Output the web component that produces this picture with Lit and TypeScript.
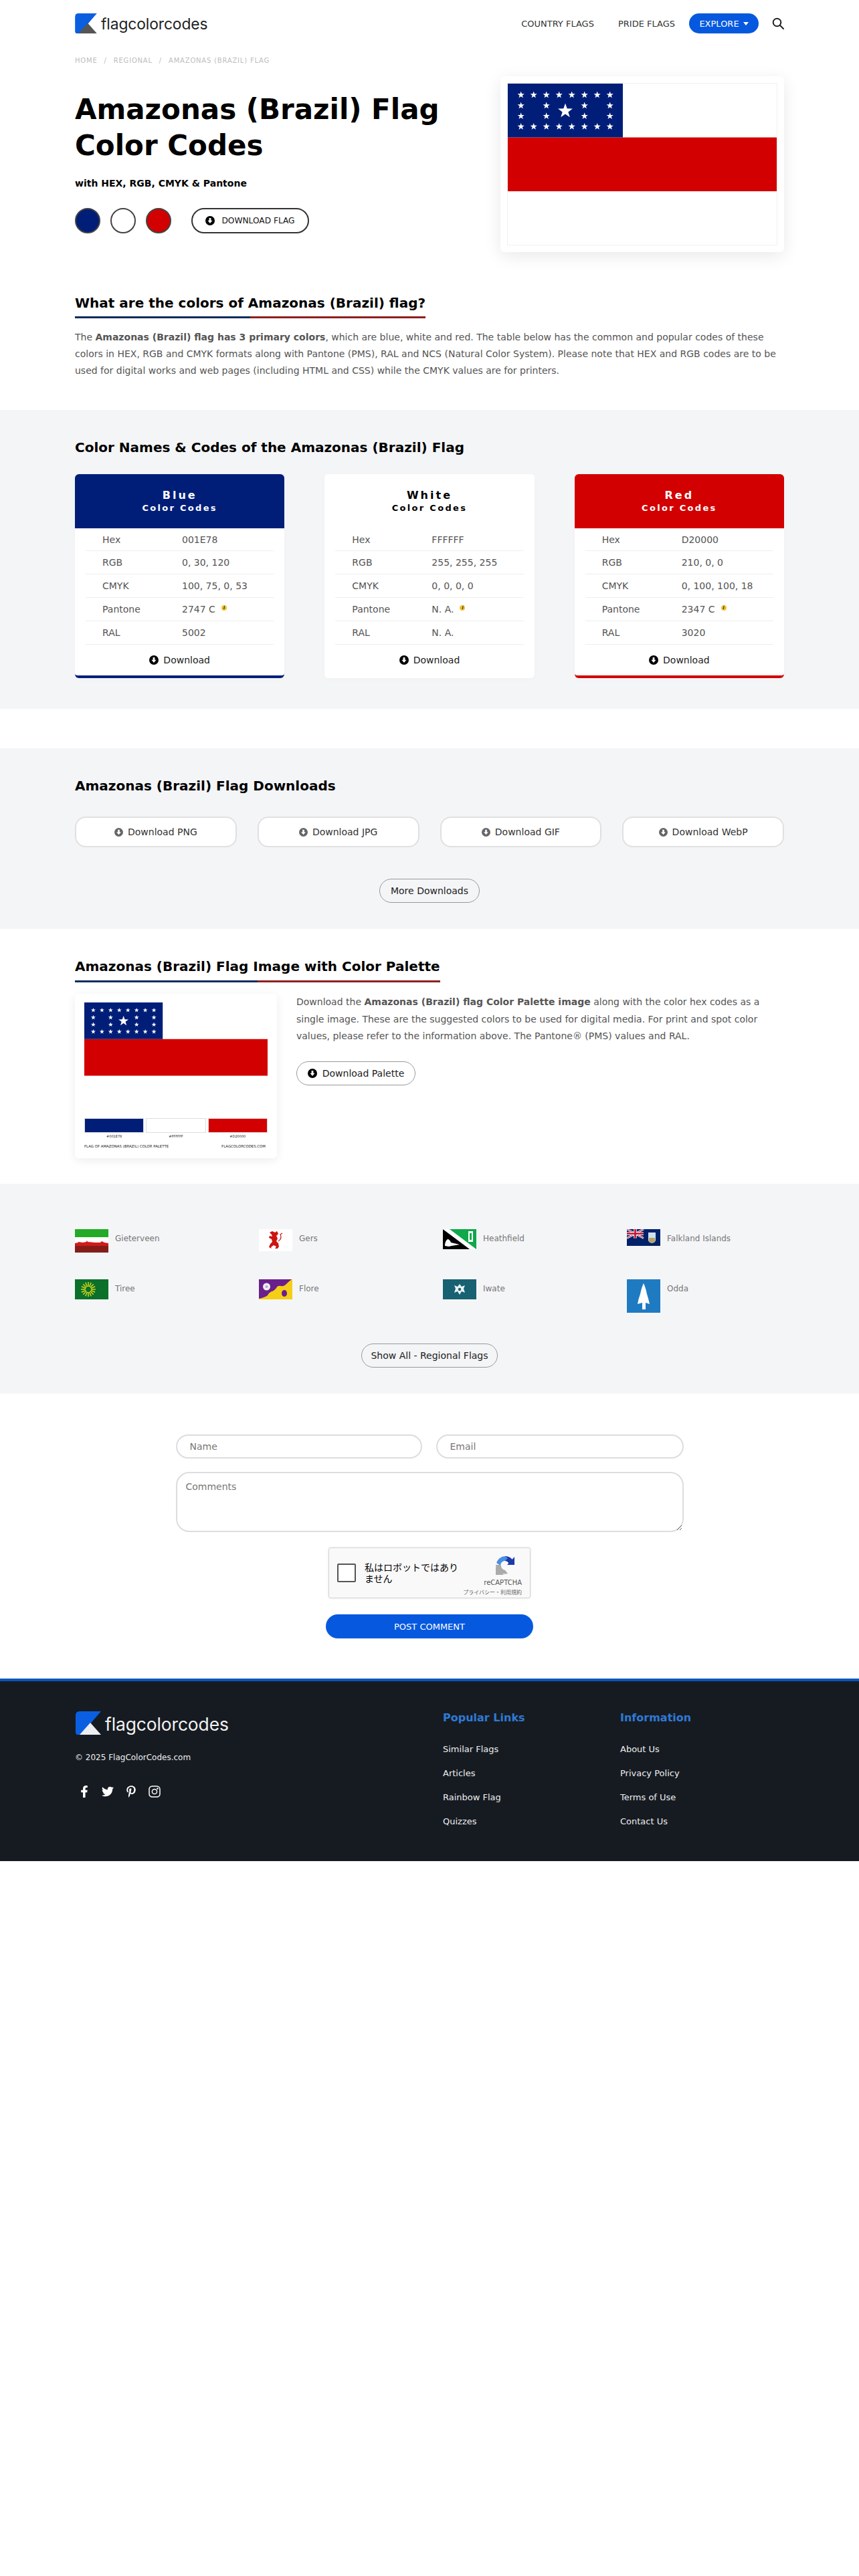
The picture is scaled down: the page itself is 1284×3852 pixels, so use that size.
import {LitElement, html, css, svg} from 'lit';
import {customElement} from 'lit/decorators.js';

const BLUE = '#001E78';
const RED = '#D20000';

// five pointed star as polygon points
const star = (cx: number, cy: number, r: number) => {
  const pts: string[] = [];
  for (let i = 0; i < 10; i++) {
    const rad = i % 2 ? r * 0.4 : r;
    const a = -Math.PI / 2 + (i * Math.PI) / 5;
    pts.push(`${(cx + rad * Math.cos(a)).toFixed(2)},${(cy + rad * Math.sin(a)).toFixed(2)}`);
  }
  return svg`<polygon points=${pts.join(' ')} fill="#fff"></polygon>`;
};

const amazonasFlag = (w: number, h: number) => {
  const cols = [19.7, 38.7, 57.7, 76.7, 95.7, 114.7, 133.7, 152.7];
  const midCols = [19.7, 57.7, 114.7, 152.7];
  return html`<svg class="flag-svg" width=${w} height=${h} viewBox="0 0 402 241" preserveAspectRatio="none">
    <rect width="402" height="241" fill="#fff"></rect>
    <rect y="80.5" width="402" height="80.5" fill=${RED}></rect>
    <rect width="172" height="80.5" fill=${BLUE}></rect>
    ${cols.map((x) => star(x, 17, 5.4))}
    ${cols.map((x) => star(x, 64.3, 5.4))}
    ${midCols.map((x) => star(x, 33, 5.4))}
    ${midCols.map((x) => star(x, 48.7, 5.4))}
    ${star(86, 41, 11.5)}
  </svg>`;
};

const dlIcon = (cls = '') => html`<svg class="dl ${cls}" viewBox="0 0 16 16">
  <circle cx="8" cy="8" r="8" fill="currentColor"></circle>
  <path d="M6.4 3.4h3.2v4.4h2.5L8 12.6 3.9 7.8h2.5z" fill="#fff"></path>
</svg>`;

const logo = (footer: boolean) => html`<span class="logo ${footer ? 'logo-foot' : ''}">
  <svg class="logo-mark" viewBox="0 0 38 35">
    <path d="M6 0H38L8 35H3Q0 35 0 31V6Q0 0 6 0Z" fill="#0a5fe0"></path>
    <path d="M24 17L40 35H8Z" fill=${footer ? '#eceef2' : '#555'} transform="translate(-2 0)"></path>
  </svg>
  <span class="logo-text">flagcolorcodes</span>
</span>`;

const colors = [
  {name: 'Blue', bg: BLUE, fg: '#fff', edge: BLUE, rows: [['Hex', '001E78'], ['RGB', '0, 30, 120'], ['CMYK', '100, 75, 0, 53'], ['Pantone', '2747 C'], ['RAL', '5002']]},
  {name: 'White', bg: '#fff', fg: '#000', edge: '#fff', rows: [['Hex', 'FFFFFF'], ['RGB', '255, 255, 255'], ['CMYK', '0, 0, 0, 0'], ['Pantone', 'N. A.'], ['RAL', 'N. A.']]},
  {name: 'Red', bg: RED, fg: '#fff', edge: RED, rows: [['Hex', 'D20000'], ['RGB', '210, 0, 0'], ['CMYK', '0, 100, 100, 18'], ['Pantone', '2347 C'], ['RAL', '3020']]},
];

const miniFlags = [
  {name: 'Gieterveen', w: 50, h: 35, art: svg`
    <rect width="50" height="35" fill="#fff"></rect>
    <rect width="50" height="12" fill="#23ab27"></rect>
    <path d="M0 35V21L5 20V19L12 20L17 19L18 17L19 19L30 20L38 20L40 18L42 19L44 20L50 21V35Z" fill="#cf1c1c"></path>
    <rect y="25" width="50" height="10" fill="#841d18"></rect>`},
  {name: 'Gers', w: 50, h: 33, art: svg`
    <rect width="50" height="33" fill="#fff"></rect>
    <path d="M16 5L20 3L24 5L27 3L29 7L26 10L28 14L26 18L29 21L30 26L28 29L24 29L26 26L22 24L18 27L19 29L15 27L17 22L20 19L19 15L15 13L16 10L20 11L19 8Z" fill="#cc1410"></path>
    <path d="M29 18Q35 14 32 8L35 6" fill="none" stroke="#cc1410" stroke-width="1.2"></path>`},
  {name: 'Heathfield', w: 50, h: 30, art: svg`
    <rect width="50" height="30" fill="#0fa84a"></rect>
    <path d="M0 0V30H42L0 0Z" fill="#000"></path>
    <path d="M0 0H10L50 30H40Z" fill="#fff"></path>
    <path d="M38 3h7v16h-7z" fill="#fff"></path><path d="M40 6h3v10h-3z" fill="#0fa84a"></path>
    <path d="M3 25Q3 18 7 15Q10 15 12 20L25 23L13 25L9 26Z" fill="#fff"></path>`},
  {name: 'Falkland Islands', w: 50, h: 25, art: svg`
    <rect width="50" height="25" fill="#012169"></rect>
    <path d="M0 0L25 13.5M25 0L0 13.5" stroke="#fff" stroke-width="2.6"></path>
    <path d="M0 0L25 13.5M25 0L0 13.5" stroke="#c8102e" stroke-width="1"></path>
    <path d="M12.5 0V13.5M0 6.75H25" stroke="#fff" stroke-width="4.4"></path>
    <path d="M12.5 0V13.5M0 6.75H25" stroke="#c8102e" stroke-width="2.6"></path>
    <path d="M32 5H43V16Q43 20 37.500 21Q32 20 32 16Z" fill="#cfe0ee"></path>
    <path d="M33 13H42V19L37.500 21L33 19Z" fill="#b7a467"></path>`},
  {name: 'Tiree', w: 50, h: 30, art: svg`
    <rect width="50" height="30" fill="#0a702a"></rect>
    ${Array.from({length: 16}, (_, i) => {
      const a = (i * Math.PI) / 8;
      return svg`<line x1=${20 + 4 * Math.cos(a)} y1=${15 + 4 * Math.sin(a)} x2=${20 + 11 * Math.cos(a)} y2=${15 + 11 * Math.sin(a)} stroke="#d6d61e" stroke-width="1.5"></line>`;
    })}`},
  {name: 'Flore', w: 50, h: 30, art: svg`
    <rect width="50" height="30" fill="#f5cf16"></rect>
    <path d="M0 0H49Q45 3 42 6Q38 11 33 10Q28 9 26 13Q22 18 19 18Q15 20 13 24Q9 27 0 29Z" fill="#6a1f8c"></path>
    <ellipse cx="38" cy="21" rx="4" ry="5" fill="#6a1f8c"></ellipse>
    <circle cx="11.500" cy="11" r="5.500" fill="#eee"></circle><circle cx="11.500" cy="11" r="2" fill="#b9a6c9"></circle>`},
  {name: 'Iwate', w: 50, h: 30, art: svg`
    <rect width="50" height="30" fill="#186172"></rect>
    <path d="M25 7L28 11L33 9L31 14L33 20L28 18L25 23L22 18L17 20L19 14L17 9L22 11Z" fill="#e6f2f4"></path>
    <circle cx="25" cy="15" r="2.200" fill="#186172"></circle>`},
  {name: 'Odda', w: 50, h: 50, art: svg`
    <rect width="50" height="50" fill="#1f7bc1"></rect>
    <path d="M25 6Q28 12 30 22Q33 32 34 37L28 35V45H23V35L16 37Q17 30 20 22Q22 12 25 6Z" fill="#fff"></path>`},
];

@customElement('app-root')
export class AppRoot extends LitElement {
  static styles = css`
    :host {
      display: block;
      font-family: "DejaVu Sans", sans-serif;
      color: #555;
      background: #fff;
    }
    * { box-sizing: border-box; margin: 0; padding: 0; }
    a { color: inherit; text-decoration: none; }
    svg { display: block; flex: none; }

    .wrap { width: 1060px; margin: 0 auto; }
    .gray { background: #f4f5f7; }

    /* header */
    .nav { display: flex; align-items: center; justify-content: space-between; height: 70px; }
    .nav-links { display: flex; align-items: center; font-size: 13px; color: #333; }
    .nav-links a { margin-right: 36px; }
    .nav-links a:nth-child(2) { margin-right: 21px; }
    .nav-links a.explore {
      display: flex; align-items: center; justify-content: center; gap: 6px;
      width: 104px; height: 30px; margin-right: 0; border-radius: 15px;
      background: #0659de; color: #fff; font-size: 13px;
    }
    .caret { border: 4px solid transparent; border-top: 5px solid #fff; border-bottom: 0; }
    .search { margin-left: 20px; width: 18px; height: 18px; color: #222; }

    .logo { display: flex; align-items: flex-start; gap: 6px; height: 30px; }
    .logo-mark { width: 33px; height: 30px; }
    .logo-text { font-family: Inter, sans-serif; font-size: 22.800px; line-height: 32px; color: #222; letter-spacing: -0.1px; }
    .logo-foot { height: 35px; gap: 5px; }
    .logo-foot .logo-mark { width: 40px; height: 35px; }
    .logo-foot .logo-text { color: #f2f2f2; font-size: 26.400px; line-height: 39px; }

    .crumbs { font-size: 10px; line-height: 16px; margin-top: 13px; color: #bdbdbd; letter-spacing: 0.8px; }
    .crumbs i { font-style: normal; margin: 0 10px; }

    /* hero */
    .hero { display: flex; justify-content: space-between; padding-top: 15px; }
    .hero-left { padding-top: 23px; }
    h1 { font-size: 42px; line-height: 54px; font-weight: 700; color: #000; width: 600px; }
    .sub { font-size: 14px; line-height: 24px; font-weight: 700; color: #000; margin-top: 17px; }
    .swatches { display: flex; align-items: center; margin-top: 25px; }
    .swatch { width: 38px; height: 38px; border-radius: 50%; border: 2px solid #444; margin-right: 15px; }
    .swatches .btn-flag { margin-left: 15px; }
    .btn-flag {
      display: flex; align-items: center; justify-content: center; gap: 10px;
      width: 176px; height: 38px; border: 2px solid #333; border-radius: 19px;
      font-size: 12.200px; color: #111;
    }
    .flag-card {
      width: 424px; height: 263px; padding: 11px; background: #fff; border-radius: 6px;
      box-shadow: 0 6px 26px rgba(0, 0, 0, 0.09);
    }
    .flag-card .flag-svg { outline: 1px solid #f0f0f0; }

    .dl { width: 14px; height: 14px; color: #000; }
    .dl.gray-ic { color: #666; width: 13px; height: 13px; }

    /* headings */
    .rule {
      display: inline-block; font-size: 20px; line-height: 24px; font-weight: 700; color: #000;
      padding-bottom: 11px;
      background: linear-gradient(90deg, #0b2c5e 50%, #8e2020 50%) left bottom / 100% 3px no-repeat;
    }
    h2.plain { font-size: 20px; line-height: 24px; font-weight: 700; color: #000; }

    .intro { margin-top: 64px; padding-bottom: 46px; }
    .intro p { margin-top: 16px; font-size: 14px; line-height: 25px; color: #555; }
    b { font-weight: 700; }

    /* colour cards */
    .codes { padding: 44px 0 46px; margin-bottom: 59px; }
    .card-grid { display: grid; grid-template-columns: repeat(3, 1fr); gap: 60px; margin-top: 28px; }
    .color-card { height: 305px; background: #fff; border-radius: 6px; overflow: hidden; border-bottom: 4px solid; box-shadow: 0 2px 8px rgba(0,0,0,0.02); }
    .color-head { position: relative; height: 81px; margin-bottom: -1px; padding-top: 22px; text-align: center; font-weight: 700; }
    .color-head div:first-child { font-size: 16px; line-height: 20px; letter-spacing: 3px; }
    .color-head div:last-child { font-size: 13px; line-height: 18px; letter-spacing: 2.300px; }
    .color-rows { margin: 0 16px; border-top: 1px solid #eee; }
    .color-row { display: flex; align-items: center; height: 35px; padding-left: 25px; border-bottom: 1px solid #eee; font-size: 14px; color: #555; }
    .color-row:first-child { height: 34px; }
    .color-row span:first-child { width: 119px; }
    .info {
      display: inline-block; width: 8px; height: 8px; border-radius: 50%; background: #f2c230; color: #222;
      font-size: 7px; line-height: 8px; text-align: center; font-weight: 700; font-style: italic;
      margin-left: 9px; vertical-align: 5px;
    }
    .card-dl { display: flex; align-items: center; justify-content: center; gap: 7px; height: 46px; font-size: 14px; color: #222; }

    /* downloads */
    .downloads { padding: 44px 0 39px; }
    .dl-grid { display: grid; grid-template-columns: repeat(4, 1fr); gap: 31px; margin-top: 34px; }
    .dl-btn {
      display: flex; align-items: center; justify-content: center; gap: 7px; height: 46px;
      background: #fff; border: 2px solid #e0e0e0; border-radius: 16px; font-size: 14px; color: #333;
    }
    .center { display: flex; justify-content: center; }
    .pill { display: flex; align-items: center; justify-content: center; height: 36px; border: 1px solid #999; border-radius: 18px; font-size: 14px; color: #222; }
    .more { margin-top: 47px; }
    .more .pill { width: 150px; }

    /* palette */
    .palette-sec { padding: 44px 0 38px; }
    .palette-sec .rule { padding-bottom: 12px; }
    .palette-row { display: flex; gap: 29px; margin-top: 17px; }
    .palette-card {
      flex: none; width: 302px; height: 246px; padding: 13px 14px; background: #fff; border-radius: 6px;
      box-shadow: 0 3px 14px rgba(0, 0, 0, 0.08);
    }
    .swatch-row { display: flex; gap: 3px; margin-top: 9px; }
    .swatch-row div { flex: 1; }
    .chip { height: 22px; border: 1px solid #ddd; }
    .hex { font-size: 5px; line-height: 10px; text-align: center; color: #222; }
    .pal-foot { display: flex; justify-content: space-between; margin-top: 6px; padding-right: 3px; font-size: 5.400px; line-height: 8px; color: #222; }
    .palette-text p { font-size: 14px; line-height: 25.500px; color: #555; }
    .palette-text .pill { width: 178px; gap: 8px; margin-top: 24px; }

    /* regional */
    .regional { padding: 68px 0 39px; }
    .flag-grid { display: grid; grid-template-columns: repeat(4, 275px); row-gap: 40px; }
    .flag-item { display: flex; align-items: flex-start; gap: 10px; font-size: 12px; line-height: 29px; color: #777; }
    .show { margin-top: 46px; }
    .show .pill { width: 204px; }

    /* form */
    .form { width: 759px; margin: 0 auto; padding: 61px 0 60px; }
    .inputs { display: grid; grid-template-columns: 368px 370px; gap: 21px; }
    input, textarea {
      display: block; width: 100%; border: 2px solid #ddd; border-radius: 18px; background: #fff;
      font-family: inherit; font-size: 14px; color: #333; outline: none;
    }
    input { height: 36px; padding: 0 19px; }
    textarea { height: 90px; margin-top: 20px; padding: 12px 13px; border-radius: 20px; }
    ::placeholder { color: #777; opacity: 1; }
    .captcha {
      position: relative; display: flex; align-items: center; width: 302px; height: 76px; margin: 23px auto 0;
      background: #f9f9f9; border: 1px solid #d3d3d3; border-radius: 3px; box-shadow: 0 0 4px rgba(0,0,0,.08);
      padding-left: 12px; color: #000;
    }
    .tick { flex: none; width: 28px; height: 28px; background: #fff; border: 2px solid #555; border-radius: 2px; }
    .captcha-text { width: 142px; margin-left: 13px; font-family: "Noto Sans CJK JP", sans-serif; font-size: 14px; line-height: 17px; }
    .captcha-brand { position: absolute; right: 12px; top: 10px; display: flex; flex-direction: column; align-items: flex-end; color: #555; }
    .captcha-brand svg { margin-right: 9px; }
    .captcha-brand div:nth-of-type(1) { font-size: 10px; line-height: 13px; margin-top: 3px; }
    .captcha-brand div:nth-of-type(2) { font-family: "Noto Sans CJK JP", sans-serif; font-size: 8px; line-height: 12px; margin-top: 2px; color: #666; }
    .post {
      display: flex; align-items: center; justify-content: center; width: 310px; height: 36px; margin: 24px auto 0;
      border-radius: 18px; background: #0659de; color: #fff; font-size: 13px;
    }

    /* footer */
    .footer { height: 273px; background: #161b22; border-top: 4px solid #0a56bd; color: #eee; }
    .footer .wrap { display: flex; padding-top: 45px; }
    .foot-brand { flex: none; width: 550px; }
    .copy { font-size: 12px; line-height: 18px; margin-top: 25px; }
    .social { display: flex; align-items: center; gap: 17px; margin-top: 33px; padding-left: 5px; }
    .social svg { width: 18px; height: 18px; fill: #fff; }
    .social svg.insta { fill: none; stroke: #fff; stroke-width: 1.5; }
    .foot-col { flex: none; width: 265px; }
    .foot-col h3 { font-size: 16px; line-height: 20px; font-weight: 700; color: #2f7ad6; margin-bottom: 28px; }
    .foot-col a { display: block; font-size: 13px; line-height: 18px; margin-bottom: 18px; color: #eee; }
  `;

  private colorCard(c: (typeof colors)[number]) {
    return html`<div class="color-card" style="border-bottom-color:${c.edge}">
      <div class="color-head" style="background:${c.bg};color:${c.fg}">
        <div>${c.name}</div>
        <div>Color Codes</div>
      </div>
      <div class="color-rows">
        ${c.rows.map(([k, v]) => html`<div class="color-row">
          <span>${k}</span>
          <span>${v}${k === 'Pantone' ? html`<i class="info">i</i>` : ''}</span>
        </div>`)}
      </div>
      <a class="card-dl">${dlIcon()}Download</a>
    </div>`;
  }

  render() {
    return html`
      <div class="wrap">
        <header class="nav">
          ${logo(false)}
          <nav class="nav-links">
            <a>COUNTRY FLAGS</a>
            <a>PRIDE FLAGS</a>
            <a class="explore">EXPLORE <span class="caret"></span></a>
            <svg class="search" viewBox="0 0 18 18" fill="none" stroke="currentColor" stroke-width="2">
              <circle cx="7.500" cy="7.500" r="5.800"></circle><path d="M12 12l5 5" stroke-linecap="round"></path>
            </svg>
          </nav>
        </header>
        <div class="crumbs">HOME<i>/</i>REGIONAL<i>/</i>AMAZONAS (BRAZIL) FLAG</div>
        <section class="hero">
          <div class="hero-left">
            <h1>Amazonas (Brazil) Flag<br />Color Codes</h1>
            <div class="sub">with HEX, RGB, CMYK &amp; Pantone</div>
            <div class="swatches">
              ${[BLUE, '#fff', RED].map((c) => html`<span class="swatch" style="background:${c}"></span>`)}
              <a class="btn-flag">${dlIcon()}DOWNLOAD FLAG</a>
            </div>
          </div>
          <div class="flag-card">${amazonasFlag(402, 241)}</div>
        </section>
        <section class="intro">
          <h2 class="rule">What are the colors of Amazonas (Brazil) flag?</h2>
          <p>The <b>Amazonas (Brazil) flag has 3 primary colors</b>, which are blue, white and red. The table below has the common and popular codes of these colors in HEX, RGB and CMYK formats along with Pantone (PMS), RAL and NCS (Natural Color System). Please note that HEX and RGB codes are to be used for digital works and web pages (including HTML and CSS) while the CMYK values are for printers.</p>
        </section>
      </div>

      <section class="gray codes">
        <div class="wrap">
          <h2 class="plain">Color Names &amp; Codes of the Amazonas (Brazil) Flag</h2>
          <div class="card-grid">${colors.map((c) => this.colorCard(c))}</div>
        </div>
      </section>

      <section class="gray downloads">
        <div class="wrap">
          <h2 class="plain">Amazonas (Brazil) Flag Downloads</h2>
          <div class="dl-grid">
            ${['PNG', 'JPG', 'GIF', 'WebP'].map((f) => html`<a class="dl-btn">${dlIcon('gray-ic')}Download ${f}</a>`)}
          </div>
          <div class="center more"><a class="pill">More Downloads</a></div>
        </div>
      </section>

      <section class="palette-sec">
        <div class="wrap">
          <h2 class="rule">Amazonas (Brazil) Flag Image with Color Palette</h2>
          <div class="palette-row">
            <div class="palette-card">
              ${amazonasFlag(274, 164)}
              <div class="swatch-row">
                ${[[BLUE, '#001E78'], ['#fff', '#FFFFFF'], [RED, '#D20000']].map(([bg, hex]) => html`<div>
                  <div class="chip" style="background:${bg}"></div>
                  <div class="hex">${hex}</div>
                </div>`)}
              </div>
              <div class="pal-foot"><span>FLAG OF AMAZONAS (BRAZIL) COLOR PALETTE</span><span>FLAGCOLORCODES.COM</span></div>
            </div>
            <div class="palette-text">
              <p>Download the <b>Amazonas (Brazil) flag Color Palette image</b> along with the color hex codes as a single image. These are the suggested colors to be used for digital media. For print and spot color values, please refer to the information above. The Pantone® (PMS) values and RAL.</p>
              <a class="pill">${dlIcon()}Download Palette</a>
            </div>
          </div>
        </div>
      </section>

      <section class="gray regional">
        <div class="wrap">
          <div class="flag-grid">
            ${miniFlags.map((f) => html`<a class="flag-item">
              <svg width=${f.w} height=${f.h} viewBox="0 0 ${f.w} ${f.h}">${f.art}</svg>
              <span>${f.name}</span>
            </a>`)}
          </div>
          <div class="center show"><a class="pill">Show All - Regional Flags</a></div>
        </div>
      </section>

      <section class="form">
        <div class="inputs">
          <input placeholder="Name" />
          <input placeholder="Email" />
        </div>
        <textarea placeholder="Comments"></textarea>
        <div class="captcha">
          <span class="tick"></span>
          <span class="captcha-text">私はロボットではありません</span>
          <div class="captcha-brand">
            <svg width="32" height="32" viewBox="0 0 32 32" fill="none">
              <path d="M16 2A14 14 0 0 1 30 15H22A7 7 0 0 0 16 9Z" fill="#1c3aa9"></path>
              <path d="M30 3V15H19Z" fill="#1c3aa9"></path>
              <path d="M16 2A14 14 0 0 0 3 12L9 16A7 7 0 0 1 16 9L20 5Z" fill="#4a90e2"></path>
              <path d="M2 15H10A7 7 0 0 0 16 23L20 28A14 14 0 0 1 2 16Z" fill="#ababab"></path>
              <path d="M2 30V18L14 30Z" fill="#ababab"></path>
            </svg>
            <div>reCAPTCHA</div>
            <div>プライバシー・利用規約</div>
          </div>
        </div>
        <a class="post">POST COMMENT</a>
      </section>

      <footer class="footer">
        <div class="wrap">
          <div class="foot-brand">
            ${logo(true)}
            <div class="copy">© 2025 FlagColorCodes.com</div>
            <div class="social">
              <svg viewBox="0 0 320 512"><path d="M279.14 288l14.22-92.66h-88.91v-60.13c0-25.35 12.42-50.06 52.24-50.06h40.42V6.26S260.43 0 225.36 0c-73.22 0-121.08 44.38-121.08 124.72v70.62H22.89V288h81.39v224h100.17V288z"></path></svg>
              <svg viewBox="0 0 512 512"><path d="M459.37 151.716c.325 4.548.325 9.097.325 13.645 0 138.72-105.583 298.558-298.558 298.558-59.452 0-114.68-17.219-161.137-47.106 8.447.974 16.568 1.299 25.34 1.299 49.055 0 94.213-16.568 130.274-44.832-46.132-.975-84.792-31.188-98.112-72.772 6.498.974 12.995 1.624 19.818 1.624 9.421 0 18.843-1.3 27.614-3.573-48.081-9.747-84.143-51.98-84.143-102.985v-1.299c13.969 7.797 30.214 12.67 47.431 13.319-28.264-18.843-46.781-51.005-46.781-87.391 0-19.492 5.197-37.36 14.294-52.954 51.655 63.675 129.3 105.258 216.365 109.807-1.624-7.797-2.599-15.918-2.599-24.04 0-57.828 46.782-104.934 104.934-104.934 30.213 0 57.502 12.67 76.67 33.137 23.715-4.548 46.456-13.32 66.599-25.34-7.798 24.366-24.366 44.833-46.132 57.827 21.117-2.273 41.584-8.122 60.426-16.243-14.292 20.791-32.161 39.308-52.628 54.253z"></path></svg>
              <svg viewBox="0 0 384 512"><path d="M204 6.5C101.4 6.5 0 74.9 0 185.6 0 256 39.6 296 63.6 296c9.9 0 15.6-27.6 15.6-35.4 0-9.3-23.7-29.1-23.7-67.8 0-80.4 61.2-137.4 140.4-137.4 68.1 0 118.5 38.7 118.5 109.8 0 53.1-21.3 152.7-90.3 152.7-24.9 0-46.2-18-46.2-43.8 0-37.8 26.4-74.4 26.4-113.4 0-66.2-93.9-54.2-93.9 25.8 0 16.8 2.1 35.4 9.6 50.7-13.8 59.4-42 147.9-42 209.1 0 18.9 2.7 37.5 4.5 56.4 3.4 3.8 1.7 3.4 6.9 1.500 50.4-69 48.6-82.5 71.4-172.8 12.3 23.4 44.1 36 69.3 36 106.2 0 153.9-103.5 153.9-196.8C384 71.3 298.2 6.5 204 6.5z"></path></svg>
              <svg class="insta" viewBox="0 0 18 18"><rect x="1" y="1" width="16" height="16" rx="4.500"></rect><circle cx="9" cy="9" r="3.600"></circle><circle cx="13.500" cy="4.500" r="0.600"></circle></svg>
            </div>
          </div>
          <div class="foot-col">
            <h3>Popular Links</h3>
            <a>Similar Flags</a><a>Articles</a><a>Rainbow Flag</a><a>Quizzes</a>
          </div>
          <div class="foot-col">
            <h3>Information</h3>
            <a>About Us</a><a>Privacy Policy</a><a>Terms of Use</a><a>Contact Us</a>
          </div>
        </div>
      </footer>
    `;
  }
}
